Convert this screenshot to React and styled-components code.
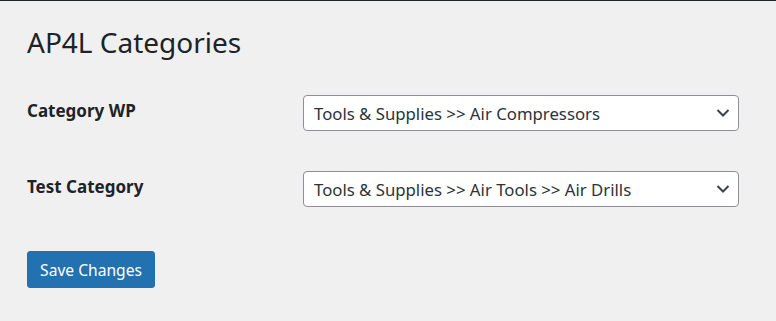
import styled, { createGlobalStyle } from "styled-components";

const GlobalStyle = createGlobalStyle`
  html, body {
    margin: 0;
    padding: 0;
    background: #f0f0f1;
  }
  body {
    font-family: "Noto Sans", "Open Sans", sans-serif;
    color: #1d2327;
  }
`;

const AdminBar = styled.div`
  height: 1px;
  background: #1d2327;
`;

const Wrap = styled.div`
  padding: 23px 27px 0;
`;

const Heading = styled.h1`
  margin: 0;
  font-size: 28px;
  font-weight: 400;
  line-height: 36px;
  color: #1d2327;
`;

const FormTable = styled.div`
  margin-top: 15px;
`;

const Row = styled.div`
  display: grid;
  grid-template-columns: 276px 436px;
  align-items: center;
  padding: 20px 0;
`;

const Label = styled.label`
  margin-bottom: 5px;
  font-size: 17px;
  font-weight: 700;
  color: #1d2327;
`;

const SelectBox = styled.div`
  position: relative;
  height: 36px;
  box-sizing: border-box;
  border: 1px solid #8c8f94;
  border-radius: 4px;
  background: #fff;
  display: flex;
  align-items: center;
  padding: 0 40px 0 10px;
  font-size: 16.75px;
  color: #2c3338;
  white-space: nowrap;
`;

const Chevron = styled.svg`
  position: absolute;
  right: 5px;
  top: 50%;
  transform: translateY(-50%);
`;

const Submit = styled.button`
  margin-top: 24px;
  height: 37px;
  width: 128px;
  padding: 0;
  font-family: inherit;
  font-size: 15.6px;
  color: #fff;
  background: #2271b1;
  border: 1px solid #2271b1;
  border-radius: 3px;
  cursor: pointer;
`;

const fields = [
  { label: "Category WP", value: "Tools & Supplies >> Air Compressors" },
  { label: "Test Category", value: "Tools & Supplies >> Air Tools >> Air Drills" },
];

const Select = ({ value }) => (
  <SelectBox>
    {value}
    <Chevron width="20" height="20" viewBox="0 0 20 20">
      <path d="M4.5 7l5.5 5.5 5.5-5.5" fill="none" stroke="#3c434a" strokeWidth="2" />
    </Chevron>
  </SelectBox>
);

const App = () => (
  <>
    <GlobalStyle />
    <AdminBar />
    <Wrap>
      <Heading>AP4L Categories</Heading>
      <FormTable>
        {fields.map((f) => (
          <Row key={f.label}>
            <Label>{f.label}</Label>
            <Select value={f.value} />
          </Row>
        ))}
      </FormTable>
      <Submit>Save Changes</Submit>
    </Wrap>
  </>
);

export default App;
